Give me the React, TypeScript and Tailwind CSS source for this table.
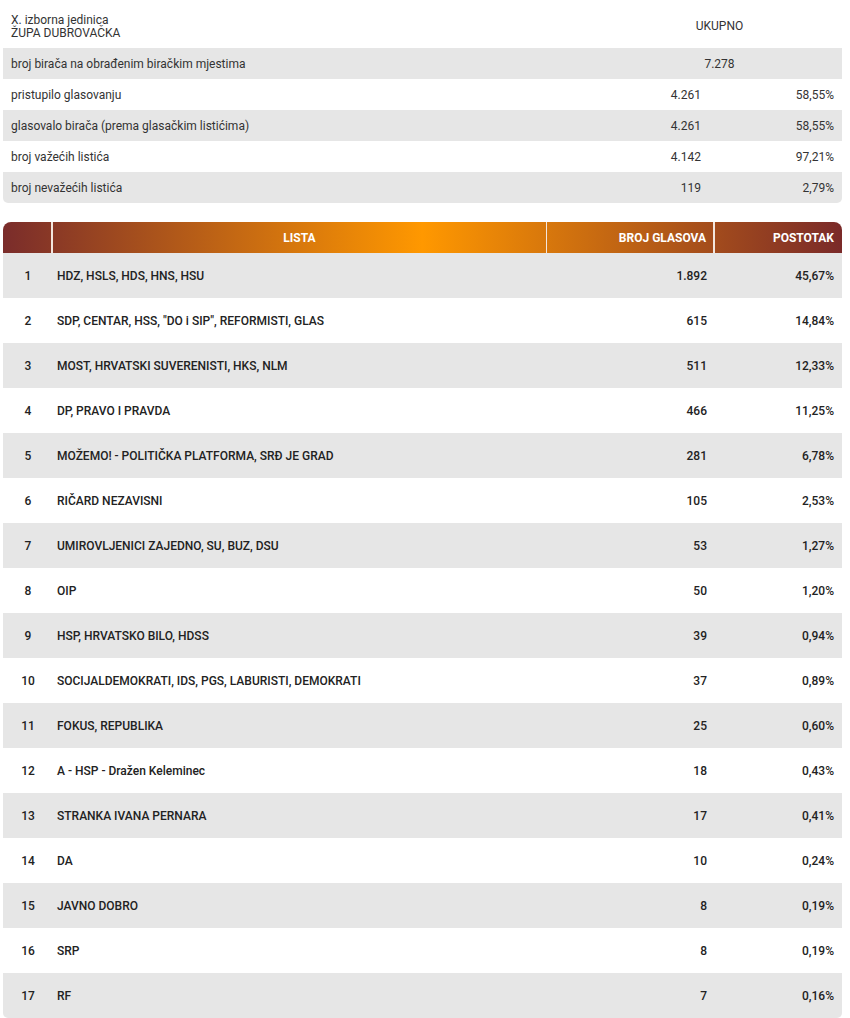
import React from "react";

const summary = [
  { label: "broj birača na obrađenim biračkim mjestima", total: "7.278" },
  { label: "pristupilo glasovanju", n: "4.261", p: "58,55%" },
  { label: "glasovalo birača (prema glasačkim listićima)", n: "4.261", p: "58,55%" },
  { label: "broj važećih listića", n: "4.142", p: "97,21%" },
  { label: "broj nevažećih listića", n: "119", p: "2,79%" },
];

const lists: [string, string, string][] = [
  ["HDZ, HSLS, HDS, HNS, HSU", "1.892", "45,67%"],
  ['SDP, CENTAR, HSS, "DO i SIP", REFORMISTI, GLAS', "615", "14,84%"],
  ["MOST, HRVATSKI SUVERENISTI, HKS, NLM", "511", "12,33%"],
  ["DP, PRAVO I PRAVDA", "466", "11,25%"],
  ["MOŽEMO! - POLITIČKA PLATFORMA, SRĐ JE GRAD", "281", "6,78%"],
  ["RIČARD NEZAVISNI", "105", "2,53%"],
  ["UMIROVLJENICI ZAJEDNO, SU, BUZ, DSU", "53", "1,27%"],
  ["OIP", "50", "1,20%"],
  ["HSP, HRVATSKO BILO, HDSS", "39", "0,94%"],
  ["SOCIJALDEMOKRATI, IDS, PGS, LABURISTI, DEMOKRATI", "37", "0,89%"],
  ["FOKUS, REPUBLIKA", "25", "0,60%"],
  ["A - HSP - Dražen Keleminec", "18", "0,43%"],
  ["STRANKA IVANA PERNARA", "17", "0,41%"],
  ["DA", "10", "0,24%"],
  ["JAVNO DOBRO", "8", "0,19%"],
  ["SRP", "8", "0,19%"],
  ["RF", "7", "0,16%"],
];

export default function App() {
  return (
    <div
      className="w-[850px] bg-white px-[3px] pr-[8px] text-[12px]"
      style={{ fontFamily: "Roboto, 'Noto Sans', sans-serif" }}
    >
      {/* Summary table */}
      <div className="text-[#333]">
        <div className="grid h-[48px] grid-cols-[594px_1fr] items-center">
          <div className="pl-[8px] pt-[5px] leading-[13px]">
            <div>X. izborna jedinica</div>
            <div>ŽUPA DUBROVAČKA</div>
          </div>
          <div className="pt-[4px] text-center">UKUPNO</div>
        </div>
        {summary.map((r, i) => (
          <div
            key={i}
            className={`grid h-[31px] grid-cols-[594px_112px_1fr] items-center ${
              i % 2 === 0 ? "bg-[#e6e6e6]" : "bg-white"
            } ${i === summary.length - 1 ? "rounded-b-[5px]" : ""}`}
          >
            <div className="pl-[8px]">{r.label}</div>
            {r.total ? (
              <div className="col-span-2 text-center">{r.total}</div>
            ) : (
              <>
                <div className="pr-[8px] text-right">{r.n}</div>
                <div className="pr-[8px] text-right">{r.p}</div>
              </>
            )}
          </div>
        ))}
      </div>

      {/* Results table */}
      <div className="mt-[19px]">
        <div className="grid h-[31px] grid-cols-[50px_494px_168px_1fr] items-stretch rounded-t-[8px] bg-[linear-gradient(90deg,#7a2c2b_0%,#ff9800_50%,#7a2a29_100%)] font-bold text-white">
          <div className="border-r-[2px] border-[#f3e6de]"></div>
          <div className="flex items-center justify-center border-r-[1px] border-[#f3e6de]">LISTA</div>
          <div className="flex items-center justify-end border-r-[2px] border-[#f3e6de] pr-[7px]">BROJ GLASOVA</div>
          <div className="flex items-center justify-end pr-[8px]">POSTOTAK</div>
        </div>
        {lists.map((r, i) => (
          <div
            key={i}
            className={`grid h-[45px] grid-cols-[50px_494px_168px_1fr] items-center font-medium text-[#222] ${
              i % 2 === 0 ? "bg-[#e6e6e6]" : "bg-white"
            } ${i === lists.length - 1 ? "rounded-b-[5px]" : ""}`}
          >
            <div className="text-center">{i + 1}</div>
            <div className="pl-[4px]">{r[0]}</div>
            <div className="pr-[8px] text-right">{r[1]}</div>
            <div className="pr-[8px] text-right">{r[2]}</div>
          </div>
        ))}
      </div>
    </div>
  );
}
